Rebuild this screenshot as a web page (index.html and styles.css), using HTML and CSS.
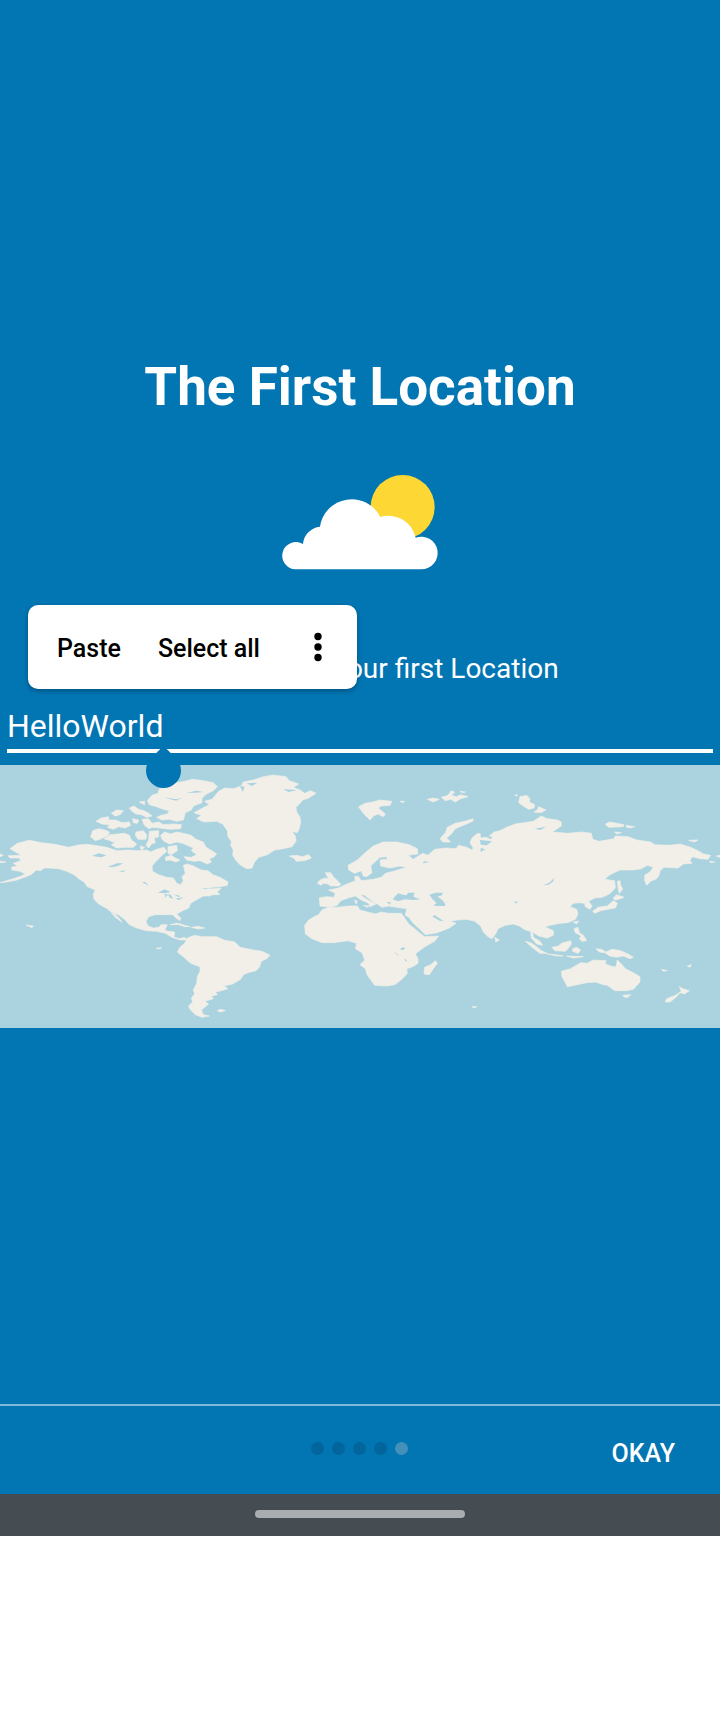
FILE: index.html
```html
<!DOCTYPE html>
<html lang="en">
<head>
<meta charset="utf-8">
<meta name="viewport" content="width=device-width, initial-scale=1">
<title>The First Location</title>
<link rel="stylesheet" href="styles.css">
</head>
<body>
<div class="screen">
  <main class="intro">
    <h1 class="title">The First Location</h1>
    <svg class="weather" viewBox="0 0 600 360" aria-hidden="true">
      <circle cx="428" cy="141" r="96" fill="#fdd835"/>
      <path fill="#fff" d="M106 328A41 41 0 1 1 129 252A57 57 0 0 1 180 200A96 96 0 0 1 361 171A83 83 0 0 1 467 233A49 49 0 1 1 484 328Z"/>
    </svg>
    <label class="hint" for="location">Please select your first Location</label>
    <div class="field">
      <input class="field-input" id="location" type="text" value="HelloWorld">
      <span class="handle"></span>
      <div class="edit-menu" role="toolbar" aria-label="Text actions">
        <button class="edit-action" type="button">Paste</button>
        <button class="edit-action" type="button">Select all</button>
        <button class="edit-more" type="button" aria-label="More options">
          <svg class="more-icon" viewBox="0 0 8 30" aria-hidden="true"><circle cx="4" cy="4.5" r="3.7"/><circle cx="4" cy="15" r="3.7"/><circle cx="4" cy="25.5" r="3.7"/></svg>
        </button>
      </div>
    </div>
    <svg class="map" viewBox="0 15 2160 789" role="img" aria-label="World map">
      <g class="land">
        <!-- North America -->
        <path d="M30 266L52 250L88 241L125 248L165 253L205 262L235 255L262 253L290 257L320 262L350 272L385 270L410 272L440 270L452 276L470 268L492 262L500 274L484 288L468 304L456 318L458 334L476 344L500 352L520 354L530 370L542 374L550 362L546 350L556 340L550 316L562 312L580 318L604 330L624 332L640 345L660 352L684 366L682 376L660 380L636 382L615 388L640 386L664 384L652 396L660 404L640 404L628 408L610 408L592 418L572 430L566 444L548 452L530 462L542 474L540 482L528 474L518 464L490 464L464 464L446 470L438 484L444 498L460 504L476 502L484 494L502 494L494 510L504 514L524 516L522 532L540 536L554 532L562 540L540 540L516 532L496 520L470 514L440 512L410 504L388 494L376 480L358 466L330 454L322 446L296 432L282 418L280 402L286 390L262 380L252 366L236 356L222 344L200 334L176 326L148 324L132 324L122 332L108 330L96 342L78 350L50 360L20 366L0 368L40 356L64 348L76 342L60 334L36 330L34 322L52 318L40 310L62 302L58 294L30 294L24 287L64 286Z"/>
        <path d="M0 282L10 286L0 290ZM0 304L18 306L0 308ZM334 458L346 472L366 487L360 478L344 462Z"/>
        <!-- Canadian Arctic -->
        <path d="M272 230L278 212L296 206L314 210L328 216L324 226L304 236L286 242Z"/>
        <path d="M312 236L330 224L354 222L374 220L388 226L394 240L410 252L400 262L374 262L350 264L334 254L346 248L330 242Z"/>
        <path d="M408 216L430 212L440 224L438 238L414 238L406 226ZM448 214L476 212L476 230L462 234L466 248L454 252L446 264L438 256L446 240ZM420 258L434 262L424 270Z"/>
        <path d="M482 226L494 216L512 222L530 216L550 220L574 226L588 238L610 246L618 262L636 272L650 282L640 292L628 296L634 306L622 312L600 302L582 304L560 300L552 290L574 292L590 284L574 272L580 264L562 256L548 250L530 246L510 252L496 246L486 238Z"/>
        <path d="M504 260L530 256L532 272L514 284L504 280ZM496 292L514 286L526 294L540 300L528 306L510 300L498 302Z"/>
        <path d="M288 184L304 174L326 170L326 180L346 180L366 188L388 186L392 196L376 204L356 200L340 208L322 202L330 194L306 192ZM334 160L350 150L370 152L360 164L346 168ZM388 144L402 138L416 148L432 152L446 160L456 168L440 172L424 164L408 162L396 154ZM398 176L416 180L412 190L400 188ZM426 178L446 176L456 190L476 186L490 194L520 192L544 194L542 206L510 208L480 204L458 202L446 206L432 194ZM418 126L434 124L434 134Z"/>
        <path d="M442 122L456 106L474 100L478 86L506 80L520 70L554 64L578 58L610 62L640 68L652 80L640 92L620 102L606 114L606 128L580 138L574 150L556 158L550 180L530 184L508 178L486 180L470 172L484 166L502 162L508 152L490 148L470 140L448 134Z"/>
        <!-- Greenland -->
        <path d="M582 158L612 142L628 134L614 124L636 118L656 94L674 84L700 86L724 78L730 66L760 60L790 50L820 45L858 50L868 62L896 72L880 82L900 90L914 100L932 92L948 100L926 114L908 120L898 132L888 142L890 156L900 172L902 186L898 206L892 218L876 214L886 228L888 244L876 260L850 266L824 270L802 284L776 292L764 306L756 324L740 326L722 316L710 304L698 286L700 270L692 256L694 244L684 230L682 212L668 192L650 184L612 186L590 176L604 166Z"/>
        <path d="M868 288L890 286L906 290L926 284L934 294L914 302L888 304L884 296Z"/>
        <!-- South America and Caribbean -->
        <path d="M562 534L584 526L606 530L650 530L672 540L704 546L720 562L760 570L786 574L810 586L800 596L784 604L778 622L768 632L744 638L730 644L722 658L698 672L672 678L684 686L664 692L646 696L652 704L634 708L640 716L614 724L626 732L614 742L604 750L610 764L628 768L606 772L586 764L570 748L566 738L578 726L574 714L584 702L580 690L590 670L592 650L600 634L600 620L572 610L552 592L532 576L540 562L554 550Z"/>
        <path d="M510 494L532 489L554 496L570 500L554 500L536 494ZM574 502L594 499L614 504L594 507ZM652 752L662 748L676 752L662 756ZM468 565L484 563L482 567ZM78 495L100 498L96 503Z"/>
      </g>
      <g class="land" transform="translate(720 0)">
        <!-- Africa -->
        <path d="M236 464L246 450L264 442L292 442L326 438L352 438L360 450L382 456L406 462L424 456L446 460L484 460L494 474L506 492L524 506L538 518L554 530L596 528L584 544L562 556L544 568L526 582L534 596L534 610L518 620L500 626L502 640L486 658L464 674L440 678L404 676L394 662L382 646L376 626L360 614L374 600L366 578L346 566L350 550L324 542L280 548L246 548L216 536L196 522L194 496L206 480L226 468Z"/>
        <path d="M554 622L572 614L586 602L592 610L580 626L568 644L552 642Z"/>
        <!-- Europe, Asia -->
        <path d="M240 438L238 414L258 410L282 412L286 400L266 390L296 384L316 374L346 362L344 350L354 348L364 362L400 358L424 352L436 340L460 334L500 322L480 318L450 324L422 318L420 300L442 298L440 290L420 292L404 306L392 318L396 338L380 350L370 348L364 332L344 340L326 330L324 316L352 300L378 276L400 258L430 246L470 246L508 254L532 266L534 282L504 286L520 298L548 280L564 286L584 268L620 264L648 266L656 256L680 262L696 270L700 264L690 248L696 234L710 222L720 220L722 234L738 232L752 238L760 230L748 228L762 216L780 212L800 202L826 192L852 188L880 184L904 168L922 176L952 180L964 186L964 198L936 216L984 220L1024 216L1054 220L1058 238L1078 244L1122 236L1126 228L1164 230L1190 240L1232 246L1244 254L1290 256L1320 252L1352 262L1374 272L1390 282L1412 286L1404 298L1380 296L1356 290L1350 302L1356 310L1330 312L1314 324L1272 322L1260 332L1258 344L1250 356L1232 364L1220 376L1214 362L1214 346L1230 336L1240 322L1222 316L1204 326L1180 330L1140 330L1110 344L1094 358L1124 362L1126 384L1108 402L1086 412L1064 414L1046 424L1056 438L1050 448L1036 440L1034 430L1018 428L1000 430L990 440L1010 448L1014 462L1006 478L984 488L960 490L930 496L914 500L940 512L940 526L922 534L896 528L878 516L880 532L900 544L908 556L890 552L874 534L872 514L856 510L838 498L820 492L796 496L774 506L768 520L756 536L744 530L730 516L722 498L704 484L680 478L652 480L618 486L604 478L584 464L576 470L600 484L630 484L648 490L628 504L592 518L556 524L540 508L520 490L506 472L496 466L500 446L470 442L446 438L426 442L412 432L400 426L372 404L362 406L384 420L408 432L390 440L386 430L364 420L346 408L324 414L302 422L292 436L276 440L258 440Z"/>
        <path d="M232 370L240 360L256 354L266 358L256 338L272 338L280 350L290 360L302 372L298 378L272 378L264 372L248 370L244 376ZM370 436L388 438L382 442ZM344 420L352 424L348 432Z"/>
        <!-- Arctic islands -->
        <path d="M356 140L376 130L398 126L420 120L456 124L450 136L424 138L414 144L436 162L430 170L414 162L400 168L390 180L374 164L364 152ZM480 124L494 124L488 128ZM600 236L616 218L622 202L646 190L674 184L700 176L698 184L670 196L646 206L634 222L620 234L632 246L608 246ZM562 118L580 114L598 118L580 126ZM604 112L624 106L634 92L644 96L634 106L650 110L662 104L684 110L662 116L646 126L632 118L616 122ZM660 94L676 96L668 98Z"/>
        <path d="M836 128L840 110L860 106L870 116L868 126L884 134L882 144L866 148L850 138ZM882 156L892 150L896 140L918 150L902 158ZM824 104L834 106L828 108ZM1096 192L1110 186L1152 194L1150 200L1106 202ZM1158 196L1184 200L1172 204L1160 202ZM1124 216L1144 218L1130 222ZM1346 241L1374 240L1364 246Z"/>
        <path d="M1428 288L1440 286L1440 292ZM1408 304L1424 306L1412 308Z"/>
        <!-- Japan, South-East Asia -->
        <path d="M1132 364L1140 362L1142 376L1148 388L1138 400L1134 384ZM1120 414L1130 404L1152 412L1136 418L1124 420ZM1058 454L1074 442L1102 438L1120 422L1132 430L1126 444L1104 448L1082 452L1064 460ZM1000 486L1016 483L1010 492ZM1002 506L1014 502L1018 518L1030 526L1040 542L1026 544L1018 536L1024 528L1006 518ZM764 532L778 540L768 546Z"/>
        <path d="M856 544L872 548L890 560L904 572L922 580L900 580L876 562ZM922 582L946 584L970 588L950 588ZM936 562L956 558L964 550L992 542L994 552L984 566L976 574L944 572ZM998 566L1010 562L1022 570L1014 580L998 574ZM980 588L1030 590L1000 594ZM1068 566L1084 568L1098 576L1116 568L1142 572L1164 582L1180 592L1170 596L1150 588L1130 592L1110 588L1094 578L1078 576Z"/>
        <!-- Australia, New Zealand -->
        <path d="M964 634L992 626L1022 608L1042 610L1060 600L1098 602L1096 612L1118 620L1128 620L1132 600L1144 612L1156 626L1180 638L1200 650L1200 666L1180 688L1160 692L1124 692L1102 676L1090 674L1066 666L1040 668L1012 674L982 680L974 664L966 650ZM1148 706L1172 704L1164 712L1154 712ZM1318 680L1328 686L1348 692L1334 702L1320 698L1308 712L1290 726L1276 726L1280 716L1306 706L1324 694ZM1264 628L1282 632L1270 634ZM1342 618L1354 614L1350 622ZM696 740L710 740L704 744Z"/>
      </g>
      <g class="water" transform="translate(720 0)">
        <!-- Black and Caspian seas, lakes -->
        <path d="M458 418L474 400L490 404L500 406L504 398L524 398L520 410L542 418L520 420L494 418L474 424ZM568 404L586 398L608 398L606 406L592 410L604 418L614 428L616 438L590 438L580 436L590 430L578 418ZM452 426L450 434L440 426ZM478 568L488 562L496 564L490 570ZM462 574L474 588L472 582ZM492 596L498 606L500 600ZM910 376L928 368L942 354L940 364L926 374ZM820 426L834 424L830 430ZM884 206L918 200L902 210ZM720 240L756 244L740 256L722 254ZM722 264L736 268L722 276ZM548 310L570 306L552 304Z"/>
        <path d="M-444 288L-424 280L-400 286L-416 292ZM-396 320L-380 314L-370 310L-350 310L-366 318L-386 322ZM-364 334L-342 331L-350 336ZM-294 366L-284 366L-274 378L-284 372ZM-246 398L-226 388L-208 396L-226 400ZM-228 402L-208 404L-200 416L-210 414L-216 404L-226 414L-224 406ZM-200 402L-180 408L-184 412ZM-194 416L-168 412L-184 420ZM-114 384L-92 386L-104 388ZM-160 98L-130 92L-110 96L-134 98ZM-230 112L-190 118L-170 112L-192 122ZM0 78L14 80L8 96ZM20 70L52 68L36 78ZM130 88L170 90L146 96Z"/>
      </g>
    </svg>
  </main>
  <footer class="footer">
    <div class="dots" aria-label="Page 5 of 5">
      <span class="dot"></span><span class="dot"></span><span class="dot"></span><span class="dot"></span><span class="dot dot-active"></span>
    </div>
    <button class="okay" type="button">OKAY</button>
  </footer>
  <div class="nav-bar"><span class="nav-pill"></span></div>
</div>
</body>
</html>
```
FILE: styles.css
```css
* {
  box-sizing: border-box;
}

body {
  margin: 0;
  background: #fff;
  font-family: Roboto, sans-serif;
}

button,
input {
  margin: 0;
  padding: 0;
  border: 0;
  background: none;
  font: inherit;
}

.screen {
  display: flex;
  flex-direction: column;
  min-height: calc(100vh - 176px);
  background: #0275b3;
  color: #fff;
}

.intro {
  flex: 1;
  display: flex;
  flex-direction: column;
  align-items: center;
  padding-top: 355px;
}

.title {
  margin: 0 0 41px;
  font-size: 53px;
  line-height: 64px;
  font-weight: 700;
}

.weather {
  width: 200px;
  height: 120px;
}

.hint {
  margin-top: 73px;
  font-size: 28px;
  line-height: 32px;
}

.field {
  position: relative;
  align-self: stretch;
  margin: 21px 7px 12px;
}

.field-input {
  display: block;
  width: 100%;
  height: 47px;
  padding-bottom: 3px;
  border-bottom: 4px solid #fff;
  border-radius: 0;
  outline: 0;
  color: #fff;
  font-size: 32px;
  line-height: 40px;
}

.handle {
  position: absolute;
  top: 47px;
  left: 139px;
  width: 35px;
  height: 35px;
  border-radius: 0 50% 50% 50%;
  background: #0275b3;
  transform: rotate(45deg);
}

.edit-menu {
  position: absolute;
  bottom: 64px;
  left: 21px;
  display: flex;
  align-items: center;
  gap: 37px;
  height: 84px;
  padding: 0 35px 0 29px;
  border-radius: 10px;
  background: #fff;
  box-shadow: 0 2px 5px rgba(0, 0, 0, 0.3);
  color: #000;
}

.edit-action {
  padding-top: 4px;
  color: #000;
  font-size: 25px;
  line-height: 32px;
  font-weight: 500;
}

.edit-more {
  display: flex;
  margin-left: 17px;
}

.more-icon {
  width: 8px;
  height: 30px;
}

.map {
  display: block;
  width: 100%;
  background: #aad3df;
}

.land {
  fill: #f2efe9;
  stroke: #f2efe9;
  stroke-width: 2;
  stroke-linejoin: round;
}

.water {
  fill: #aad3df;
}

.footer {
  display: grid;
  grid-template-columns: 1fr auto 1fr;
  align-items: center;
  height: 90px;
  border-top: 2px solid #7fb9d9;
}

.dots {
  grid-column: 2;
  display: flex;
  gap: 8px;
  padding: 0 2px 4px 0;
}

.dot {
  width: 13px;
  height: 13px;
  border-radius: 50%;
  background: #02659b;
}

.dot-active {
  background: #4490b9;
}

.okay {
  justify-self: end;
  padding: 8px 45px 0 16px;
  color: #fff;
  font-size: 25px;
  line-height: 32px;
  font-weight: 500;
}

.nav-bar {
  display: flex;
  justify-content: center;
  padding: 16px 0 18px;
  background: #454c52;
}

.nav-pill {
  width: 210px;
  height: 8px;
  border-radius: 4px;
  background: #a9adaf;
}
```
